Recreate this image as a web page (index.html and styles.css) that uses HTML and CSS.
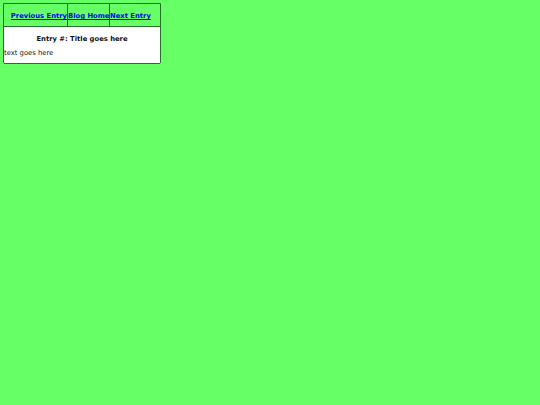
FILE: index.html
```html
<!DOCTYPE html>
<html lang="en">
<head>
  <meta charset="UTF-8" />
  <title>Entry #: Title goes here</title>
  <link rel="stylesheet" href="styles.css">
</head>
<body>

  <div class="entry">
    <div class="entry-nav">
      <a href="#" class="prev">Previous Entry</a>
      <a href="#" class="home">Blog Home</a>
      <a href="#" class="next">Next Entry</a>
    </div>
    <div class="entry-body">
      <h2>Entry #: Title goes here</h2>
      <p>text goes here</p>
    </div>
  </div>

</body>
</html>
```
FILE: styles.css
```css
body {
  margin: 3px;
  background: #66ff66;
  font-family: "DejaVu Sans", Verdana, sans-serif;
  font-size: 6.8px;
  color: #111;
}
.entry {
  width: 156px;
  border: 1px solid #24702a;
  border-radius: 0 0 2px 2px;
  overflow: hidden;
}
.entry-nav {
  display: grid;
  grid-template-columns: 64px 42px 1fr;
  height: 22px;
  border-bottom: 1px solid #24702a;
}
.entry-nav a {
  display: flex;
  align-items: center;
  padding-top: 2px;
  white-space: nowrap;
  color: #0000ee;
  font-weight: bold;
  text-decoration: underline;
  border-right: 1px solid #24702a;
}
.entry-nav a.prev {
  justify-content: flex-end;
}
.entry-nav a.next {
  border-right: none;
}
.entry-body {
  background: #fff;
  height: 36px;
}
.entry-body h2 {
  margin: 0;
  padding-top: 8px;
  text-align: center;
  font-size: 6.8px;
}
.entry-body p {
  margin: 6px 0 0 0;
}
```
